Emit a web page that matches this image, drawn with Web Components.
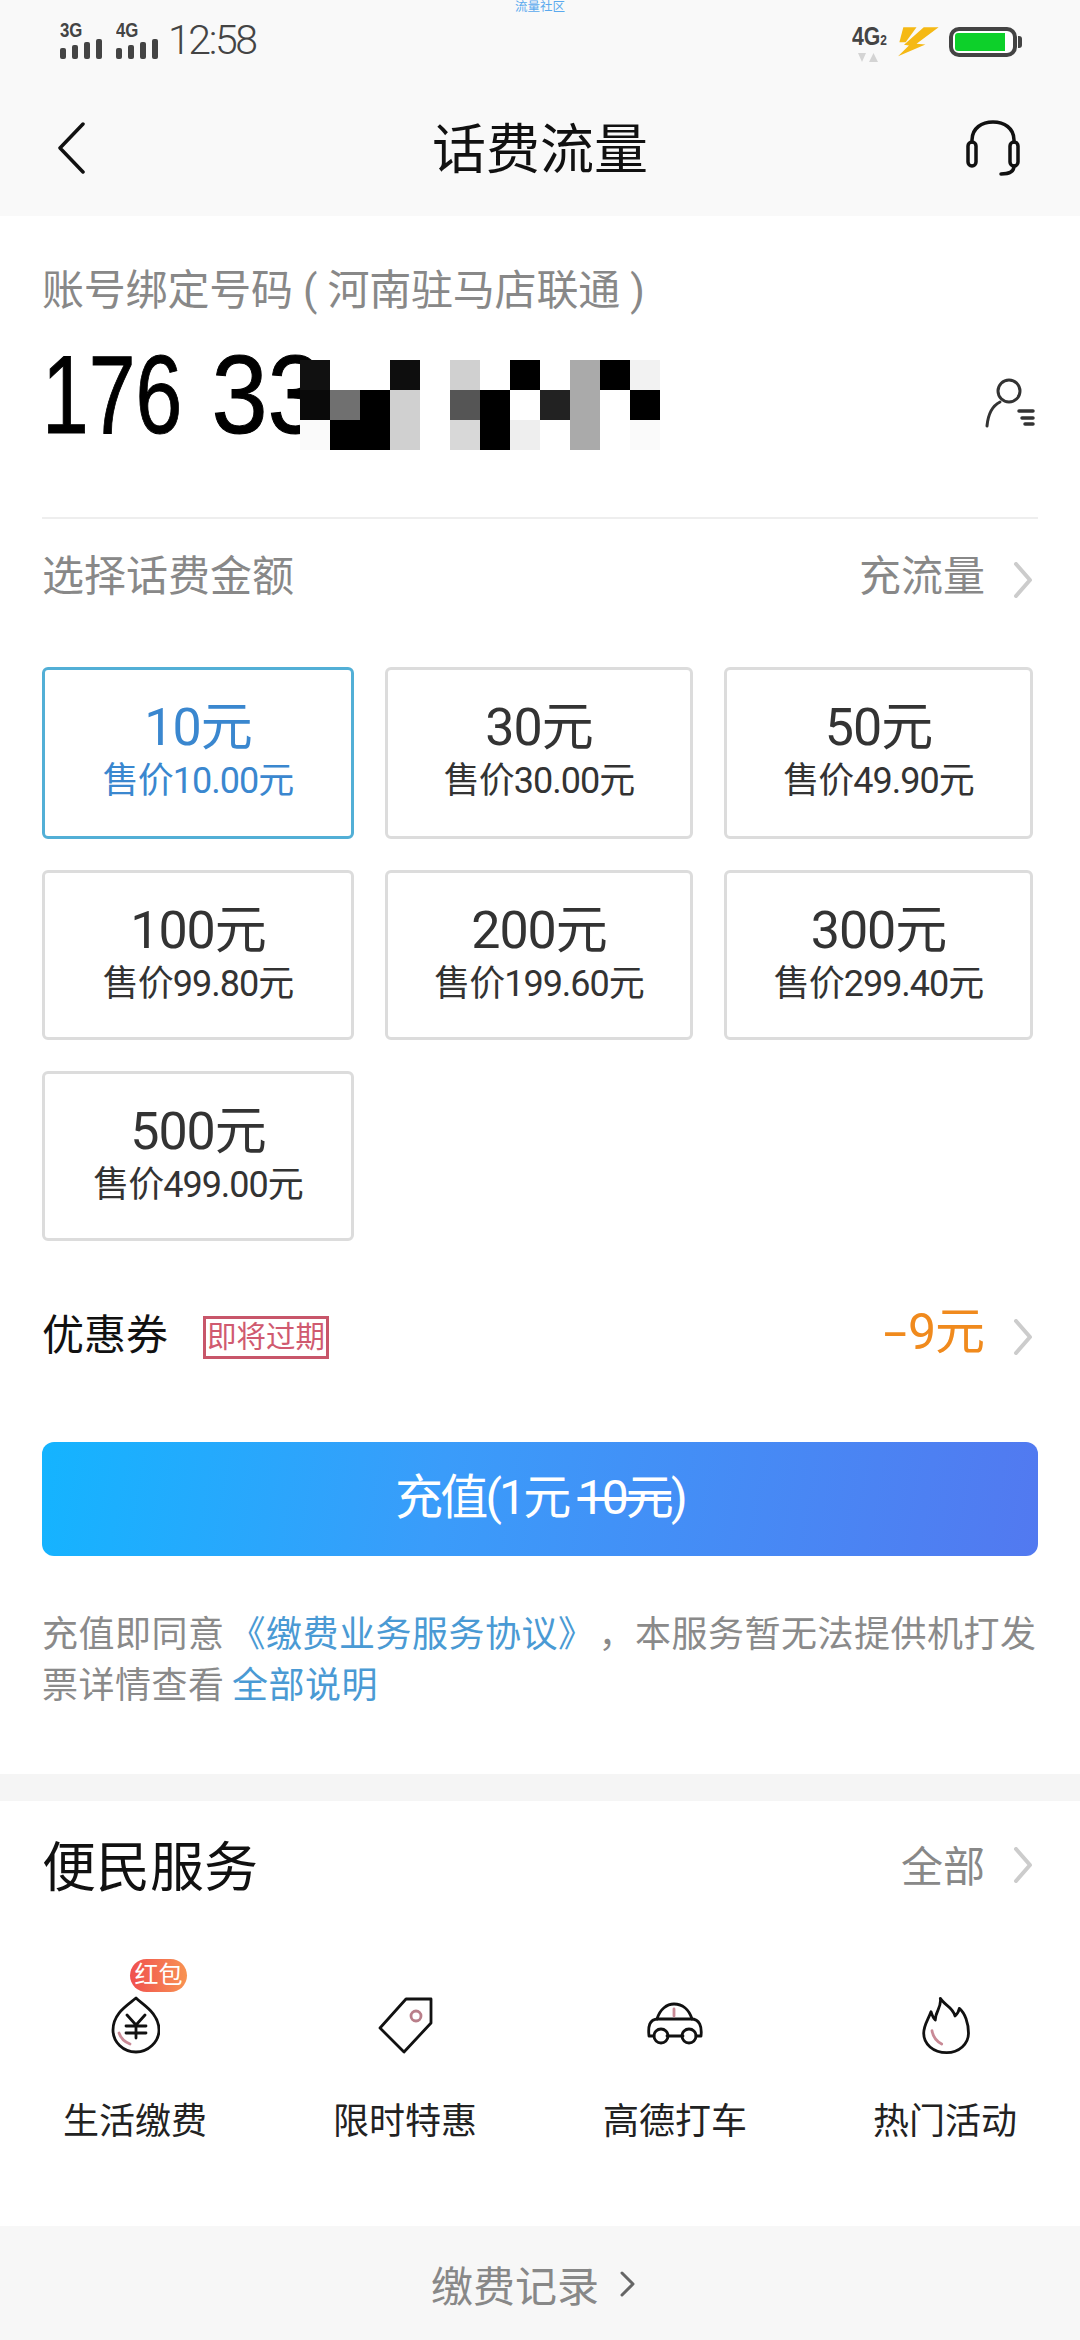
<!DOCTYPE html>
<html lang="zh">
<head>
<meta charset="utf-8">
<title>话费流量</title>
<style>
  html, body { margin: 0; padding: 0; background: #fff; }
  body { width: 1080px; font-family: Roboto, "Noto Sans CJK SC", sans-serif; }
</style>
</head>
<body>
<top-area></top-area>
<account-panel></account-panel>
<amount-grid>
  <amount-card amount="10元" price="售价10.00元" selected></amount-card>
  <amount-card amount="30元" price="售价30.00元"></amount-card>
  <amount-card amount="50元" price="售价49.90元"></amount-card>
  <amount-card amount="100元" price="售价99.80元"></amount-card>
  <amount-card amount="200元" price="售价199.60元"></amount-card>
  <amount-card amount="300元" price="售价299.40元"></amount-card>
  <amount-card amount="500元" price="售价499.00元"></amount-card>
</amount-grid>
<coupon-row></coupon-row>
<pay-button></pay-button>
<agree-note></agree-note>
<service-panel>
  <service-item label="生活缴费" icon="drop" badge="红包"></service-item>
  <service-item label="限时特惠" icon="tag"></service-item>
  <service-item label="高德打车" icon="car"></service-item>
  <service-item label="热门活动" icon="flame"></service-item>
</service-panel>
<bottom-bar></bottom-bar>

<script>
const chevron = (color) => `<svg width="22" height="36" viewBox="0 0 22 36" fill="none"><path d="M4 2 L18 18 L4 34" stroke="${color}" stroke-width="4" stroke-linecap="round" stroke-linejoin="round"/></svg>`;

class SignalIcon extends HTMLElement {
    constructor() {
        super();
        this.attachShadow({ mode: 'open' });
        this.shadowRoot.innerHTML = `
            <style>
                :host { display: block; width: 43px; }
                .label { font: 700 21px/16px "Liberation Sans", sans-serif; color: #444; height: 16px; display: block; transform: scaleX(.8); transform-origin: left; }
                svg { display: block; margin-top: 1px; }
            </style>
            <span class="label">${this.getAttribute('label')}</span>
            <svg width="43" height="20" viewBox="0 0 43 20" fill="#444">
                <rect x="0" y="9" width="6" height="11" rx="2"/>
                <rect x="12" y="6" width="6" height="14" rx="2"/>
                <rect x="24" y="3" width="6" height="17" rx="2"/>
                <rect x="36" y="0" width="6" height="20" rx="2"/>
            </svg>
        `;
    }
}
customElements.define('signal-icon', SignalIcon);

class TopArea extends HTMLElement {
    constructor() {
        super();
        this.attachShadow({ mode: 'open' });
        this.shadowRoot.innerHTML = `
            <style>
                :host { display: block; background: #f9f9f9; height: 216px; position: relative; }
                .tiny { position: absolute; left: 0; right: 0; top: 0; text-align: center; font-size: 12.5px; line-height: 14px; color: #5aa9ee; }
                .status { height: 80px; box-sizing: border-box; padding: 22px 63px 0 60px; display: flex; justify-content: space-between; }
                .left { display: flex; gap: 13px; height: 36px; }
                .time { font-size: 41px; line-height: 36px; color: #444; letter-spacing: -2.4px; margin-left: -4px; font-weight: 300; }
                .right { display: flex; }
                .net { width: 34px; margin-top: 5px; margin-right: 11px; color: #444; position: relative; }
                .net b { font: 700 25px/18px "Liberation Sans", sans-serif; display: block; transform: scaleX(.85); transform-origin: left; white-space: nowrap; }
                .net b small { font-size: 14px; font-weight: 700; }
                .net svg { display: block; margin: 4px 0 0 6px; }
                .bolt { margin: 4px 9px 0 0; }
                .battery { width: 68px; height: 30px; box-sizing: border-box; border: 4px solid #444; border-radius: 10px; margin-top: 5px; padding: 2px; background: #fff; position: relative; }
                .battery i { display: block; width: 50px; height: 100%; background: #0dd02a; border-radius: 3px 0 0 3px; }
                .battery::after { content: ""; position: absolute; right: -9px; top: 5px; width: 4px; height: 12px; background: #444; border-radius: 0 3px 3px 0; }
                .nav { height: 136px; display: flex; align-items: center; justify-content: space-between; padding: 0 60px 0 58px; position: relative; }
                .nav h1 { margin: 0; font-size: 54px; line-height: 70px; font-weight: 400; color: #111; position: absolute; left: 0; right: 0; top: 36px; text-align: center; }
                .nav svg { position: relative; display: block; }
            </style>
            <div class="tiny">流量社区</div>
            <div class="status">
                <div class="left">
                    <signal-icon label="3G"></signal-icon>
                    <signal-icon label="4G"></signal-icon>
                    <span class="time">12:58</span>
                </div>
                <div class="right">
                    <div class="net">
                        <b>4G<small>2</small></b>
                        <svg width="20" height="9" viewBox="0 0 20 9" fill="#d4d4d4"><path d="M0 0 H8 L4 9 Z M11 9 H20 L15.500 0 Z"/></svg>
                    </div>
                    <svg class="bolt" width="43" height="31" viewBox="170 76 128 94" fill="#f5b915">
                        <path d="M188 80 H228 L195 125 H176 Z"/>
                        <path d="M250 80 H295 L228 130 L255 132 L172 168 L205 135 L190 133 Z"/>
                    </svg>
                    <div class="battery"><i></i></div>
                </div>
            </div>
            <div class="nav">
                <svg width="28" height="52" viewBox="0 0 28 52" fill="none"><path d="M25 2 L2 26 L25 50" stroke="#111" stroke-width="3.5" stroke-linecap="round" stroke-linejoin="round"/></svg>
                <h1>话费流量</h1>
                <svg width="54" height="56" viewBox="0 0 54 56" fill="none" stroke="#111" stroke-width="3.500" stroke-linecap="round">
                    <path d="M6 22 V20 C6 8 16 2 27 2 C38 2 48 8 48 20 V22"/>
                    <rect x="2" y="22" width="8" height="24" rx="4"/>
                    <rect x="44" y="22" width="8" height="24" rx="4"/>
                    <path d="M48 46 C48 52 42 54 35 54"/>
                </svg>
            </div>
        `;
    }
}
customElements.define('top-area', TopArea);

class MosaicBlock extends HTMLElement {
    constructor() {
        super();
        this.attachShadow({ mode: 'open' });
        const cells = [
            '#111', '#fff', '#fff', '#0e0e0e', '#fff', '#d0d0d0', '#fff', '#000', '#fff', '#aaa', '#000', '#f2f2f2',
            '#0a0a0a', '#707070', '#000', '#d0d0d0', '#fff', '#555', '#000', '#fff', '#222', '#aaa', '#fff', '#000',
            '#fafafa', '#000', '#000', '#d0d0d0', '#fff', '#d8d8d8', '#000', '#eee', '#fff', '#aaa', '#fff', '#fafafa'
        ];
        this.shadowRoot.innerHTML = `
            <style>
                :host { display: grid; grid-template-columns: repeat(12, 30px); grid-auto-rows: 30px; }
            </style>
            ${cells.map(c => `<div style="background:${c}"></div>`).join('')}
        `;
    }
}
customElements.define('mosaic-block', MosaicBlock);

class AccountPanel extends HTMLElement {
    constructor() {
        super();
        this.attachShadow({ mode: 'open' });
        this.shadowRoot.innerHTML = `
            <style>
                :host { display: block; padding: 45px 42px 0 42px; }
                .label { font-size: 42px; line-height: 60px; color: #888; white-space: nowrap; letter-spacing: -.2px; }
                .number { height: 130px; margin-top: 9px; position: relative; display: flex; align-items: center; justify-content: flex-end; }
                .digits { position: absolute; left: 0; top: 0; font: 400 112px/130px "Liberation Sans", sans-serif; color: #000; white-space: nowrap; transform: scaleX(.75); transform-origin: left; -webkit-text-stroke: 1px #000; }
                .digits span { display: inline-block; transform: scaleX(1.2); transform-origin: left; margin-left: 8px; }
                mosaic-block { position: absolute; left: 258px; top: 30px; }
                .number svg { margin: 16px 3px 0 0; }
                hr { border: 0; height: 2px; background: #eee; margin: 57px 0 0 0; }
                .row { display: flex; justify-content: space-between; align-items: center; height: 60px; margin-top: 23px; font-size: 42px; color: #888; }
                .more { display: flex; align-items: center; gap: 27px; padding-right: 4px; }
                .more svg { margin-top: 16px; display: block; }
            </style>
            <div class="label">账号绑定号码 ( 河南驻马店联通 )</div>
            <div class="number">
                <span class="digits">176 <span>33</span></span>
                <mosaic-block></mosaic-block>
                <svg width="50" height="50" viewBox="0 0 50 50" fill="none" stroke="#333" stroke-width="3" stroke-linecap="round">
                    <circle cx="24" cy="13" r="11"/>
                    <path d="M15 24 C7 28 3 37 2 48"/>
                    <path d="M34 33 H48" stroke-width="3.500"/>
                    <path d="M37 40 H48" stroke-width="3.500"/>
                    <path d="M40 46 H48" stroke-width="3.500"/>
                </svg>
            </div>
            <hr>
            <div class="row">
                <span>选择话费金额</span>
                <span class="more">充流量 ${chevron('#ccc')}</span>
            </div>
        `;
    }
}
customElements.define('account-panel', AccountPanel);

class AmountGrid extends HTMLElement {
    constructor() {
        super();
        this.attachShadow({ mode: 'open' });
        this.shadowRoot.innerHTML = `
            <style>
                :host { display: grid; grid-template-columns: 312px 308px 309px; grid-template-rows: 172px 170px 170px; gap: 31px; margin: 65px 0 0 42px; }
            </style>
            <slot></slot>
        `;
    }
}
customElements.define('amount-grid', AmountGrid);

class AmountCard extends HTMLElement {
    constructor() {
        super();
        this.attachShadow({ mode: 'open' });
        const selected = this.hasAttribute('selected');
        this.shadowRoot.innerHTML = `
            <style>
                :host { display: block; box-sizing: border-box; border: 3px solid ${selected ? '#52afd6' : '#dcdcdc'}; border-radius: 6px; padding-top: 29px; text-align: center; color: ${selected ? '#3a87cf' : '#333'}; }
                .amount { font-size: 52px; line-height: 58px; letter-spacing: -1px; }
                .price { font-size: 36px; line-height: 48px; letter-spacing: -1px; }
            </style>
            <div class="amount">${this.getAttribute('amount')}</div>
            <div class="price">${this.getAttribute('price')}</div>
        `;
    }
}
customElements.define('amount-card', AmountCard);

class CouponRow extends HTMLElement {
    constructor() {
        super();
        this.attachShadow({ mode: 'open' });
        this.shadowRoot.innerHTML = `
            <style>
                :host { display: flex; align-items: center; height: 60px; margin: 66px 42px 0 42px; font-size: 42px; color: #111; }
                .label { margin-bottom: 12px; }
                .tag { margin-left: 35px; border: 3px solid #c8566a; color: #d05a70; font-size: 29.500px; line-height: 37px; height: 37px; padding: 0 1px; }
                .value { margin-left: auto; margin-bottom: 20px; color: #f08a1d; font-size: 50px; letter-spacing: -1px; }
                .dash { display: inline-block; transform: scaleX(1.7); margin: 0 7px 0 6px; }
                svg { margin: 0 4px 0 28px; display: block; }
            </style>
            <span class="label">优惠券</span>
            <span class="tag">即将过期</span>
            <span class="value"><span class="dash">-</span>9元</span>
            ${chevron('#ccc')}
        `;
    }
}
customElements.define('coupon-row', CouponRow);

class PayButton extends HTMLElement {
    constructor() {
        super();
        this.attachShadow({ mode: 'open' });
        this.shadowRoot.innerHTML = `
            <style>
                :host { display: flex; align-items: center; justify-content: center; box-sizing: border-box; height: 114px; padding-bottom: 12px; margin: 75px 42px 0 42px; border-radius: 12px; background: linear-gradient(100deg, #14b4ff 0%, #3a9cfa 40%, #5279f0 100%); color: #fff; font-size: 48px; letter-spacing: -2.800px; }
                s { text-decoration: line-through; }
            </style>
            <span>充值(1元 <s>10元</s>)</span>
        `;
    }
}
customElements.define('pay-button', PayButton);

class AgreeNote extends HTMLElement {
    constructor() {
        super();
        this.attachShadow({ mode: 'open' });
        this.shadowRoot.innerHTML = `
            <style>
                :host { display: block; padding: 54px 42px 62px 42px; font-size: 36px; line-height: 51px; color: #8a8a8a; white-space: nowrap; letter-spacing: .5px; }
                a { color: #4a9ad4; text-decoration: none; }
                .book { margin-left: 5px; }
                .comma { margin-left: 22px; }
                .all { margin-left: -2px; }
            </style>
            充值即同意<a class="book">《缴费业务服务协议》</a><span class="comma">，</span>本服务暂无法提供机打发<br>票详情查看 <a class="all">全部说明</a>
        `;
    }
}
customElements.define('agree-note', AgreeNote);

class ServicePanel extends HTMLElement {
    constructor() {
        super();
        this.attachShadow({ mode: 'open' });
        this.shadowRoot.innerHTML = `
            <style>
                :host { display: block; border-top: 27px solid #f5f5f5; padding: 27px 0 79px 0; }
                .head { display: flex; align-items: center; justify-content: space-between; height: 70px; padding: 0 46px 0 42px; }
                h2 { margin: 0; font-size: 54px; font-weight: 400; color: #111; }
                .all { display: flex; align-items: center; gap: 27px; font-size: 42px; color: #888; }
                .all svg { margin-top: 3px; }
                .list { display: grid; grid-template-columns: repeat(4, 270px); margin-top: 97px; }
            </style>
            <div class="head">
                <h2>便民服务</h2>
                <span class="all">全部 ${chevron('#ccc')}</span>
            </div>
            <div class="list"><slot></slot></div>
        `;
    }
}
customElements.define('service-panel', ServicePanel);

const serviceIcons = {
    drop: `<svg width="50" height="60" viewBox="0 0 50 60" fill="none" stroke="#111" stroke-width="2.800" stroke-linecap="round" stroke-linejoin="round">
        <path d="M26 3 C33 10 49 18 49 35 C49 47 38 57 26 57 C13 57 3 47 3 35 C3 18 18 10 26 3 Z"/>
        <path d="M17 20 L26 30 L35 20 M26 30 V43 M16 31 H36 M16 38 H36"/>
        <path d="M9 38 C11 44 15 47 20 49" stroke="#c98a96"/>
    </svg>`,
    tag: `<svg width="56" height="60" viewBox="0 0 56 60" fill="none" stroke="#111" stroke-width="2.800" stroke-linecap="round" stroke-linejoin="round">
        <path d="M29 4 H54 V28 L27 57 L3 33 Z"/>
        <circle cx="39" cy="21" r="5" stroke="#b97f8a"/>
    </svg>`,
    car: `<svg width="58" height="60" viewBox="0 0 58 60" fill="none" stroke="#111" stroke-width="2.800" stroke-linecap="round" stroke-linejoin="round">
        <path d="M11 24 C14 14 21 9 28 9 C36 9 43 14 46 24"/>
        <path d="M8 41 H3 C2 32 3 24 12 24 H45 C54 24 56 32 55 41 H50"/>
        <path d="M21 41 H37"/>
        <circle cx="15" cy="41" r="7"/>
        <circle cx="43" cy="41" r="7"/>
        <path d="M28 14 V21" stroke="#c98a96"/>
    </svg>`,
    flame: `<svg width="50" height="60" viewBox="0 0 50 60" fill="none" stroke="#111" stroke-width="2.800" stroke-linecap="round" stroke-linejoin="round">
        <path d="M20.300 3.300 C24 10 33 12 35 21 C37 19 39 16 39.300 13.300 C45 18 48.500 28 48.500 38.300 C48.500 49 39 57.700 26.700 57.700 C13 57.700 3.700 49 3.700 38.300 C3.700 30 8 25 11 16.700 C12 20 13 23 15.300 25 C15 17 22 12 20.300 3.300 Z"/>
        <path d="M12 35.700 C13 42 16 46 21.700 49" stroke="#c98a96"/>
    </svg>`
};

class ServiceItem extends HTMLElement {
    constructor() {
        super();
        this.attachShadow({ mode: 'open' });
        const badge = this.getAttribute('badge');
        this.shadowRoot.innerHTML = `
            <style>
                :host { display: flex; flex-direction: column; align-items: center; }
                .icon { height: 60px; position: relative; display: flex; justify-content: center; }
                .badge { position: absolute; left: 20px; top: -36px; width: 57px; height: 33px; border-radius: 17px; background: linear-gradient(90deg, #f04f4f, #f89352); color: #fff; font-size: 24px; line-height: 33px; text-align: center; white-space: nowrap; }
                .text { margin-top: 42px; font-size: 36px; line-height: 50px; color: #222; white-space: nowrap; }
            </style>
            <div class="icon">
                ${serviceIcons[this.getAttribute('icon')]}
                ${badge ? `<span class="badge">${badge}</span>` : ''}
            </div>
            <div class="text">${this.getAttribute('label')}</div>
        `;
    }
}
customElements.define('service-item', ServiceItem);

class BottomBar extends HTMLElement {
    constructor() {
        super();
        this.attachShadow({ mode: 'open' });
        this.shadowRoot.innerHTML = `
            <style>
                :host { display: flex; align-items: center; justify-content: center; gap: 20px; height: 114px; background: #f7f7f7; font-size: 42px; color: #888; padding-right: 12px; }
                svg { display: block; margin-top: 2px; }
            </style>
            <span>缴费记录</span>
            <svg width="18" height="28" viewBox="0 0 18 28" fill="none"><path d="M3 3 L14 14 L3 25" stroke="#666" stroke-width="3" stroke-linecap="round" stroke-linejoin="round"/></svg>
        `;
    }
}
customElements.define('bottom-bar', BottomBar);
</script>
</body>
</html>
